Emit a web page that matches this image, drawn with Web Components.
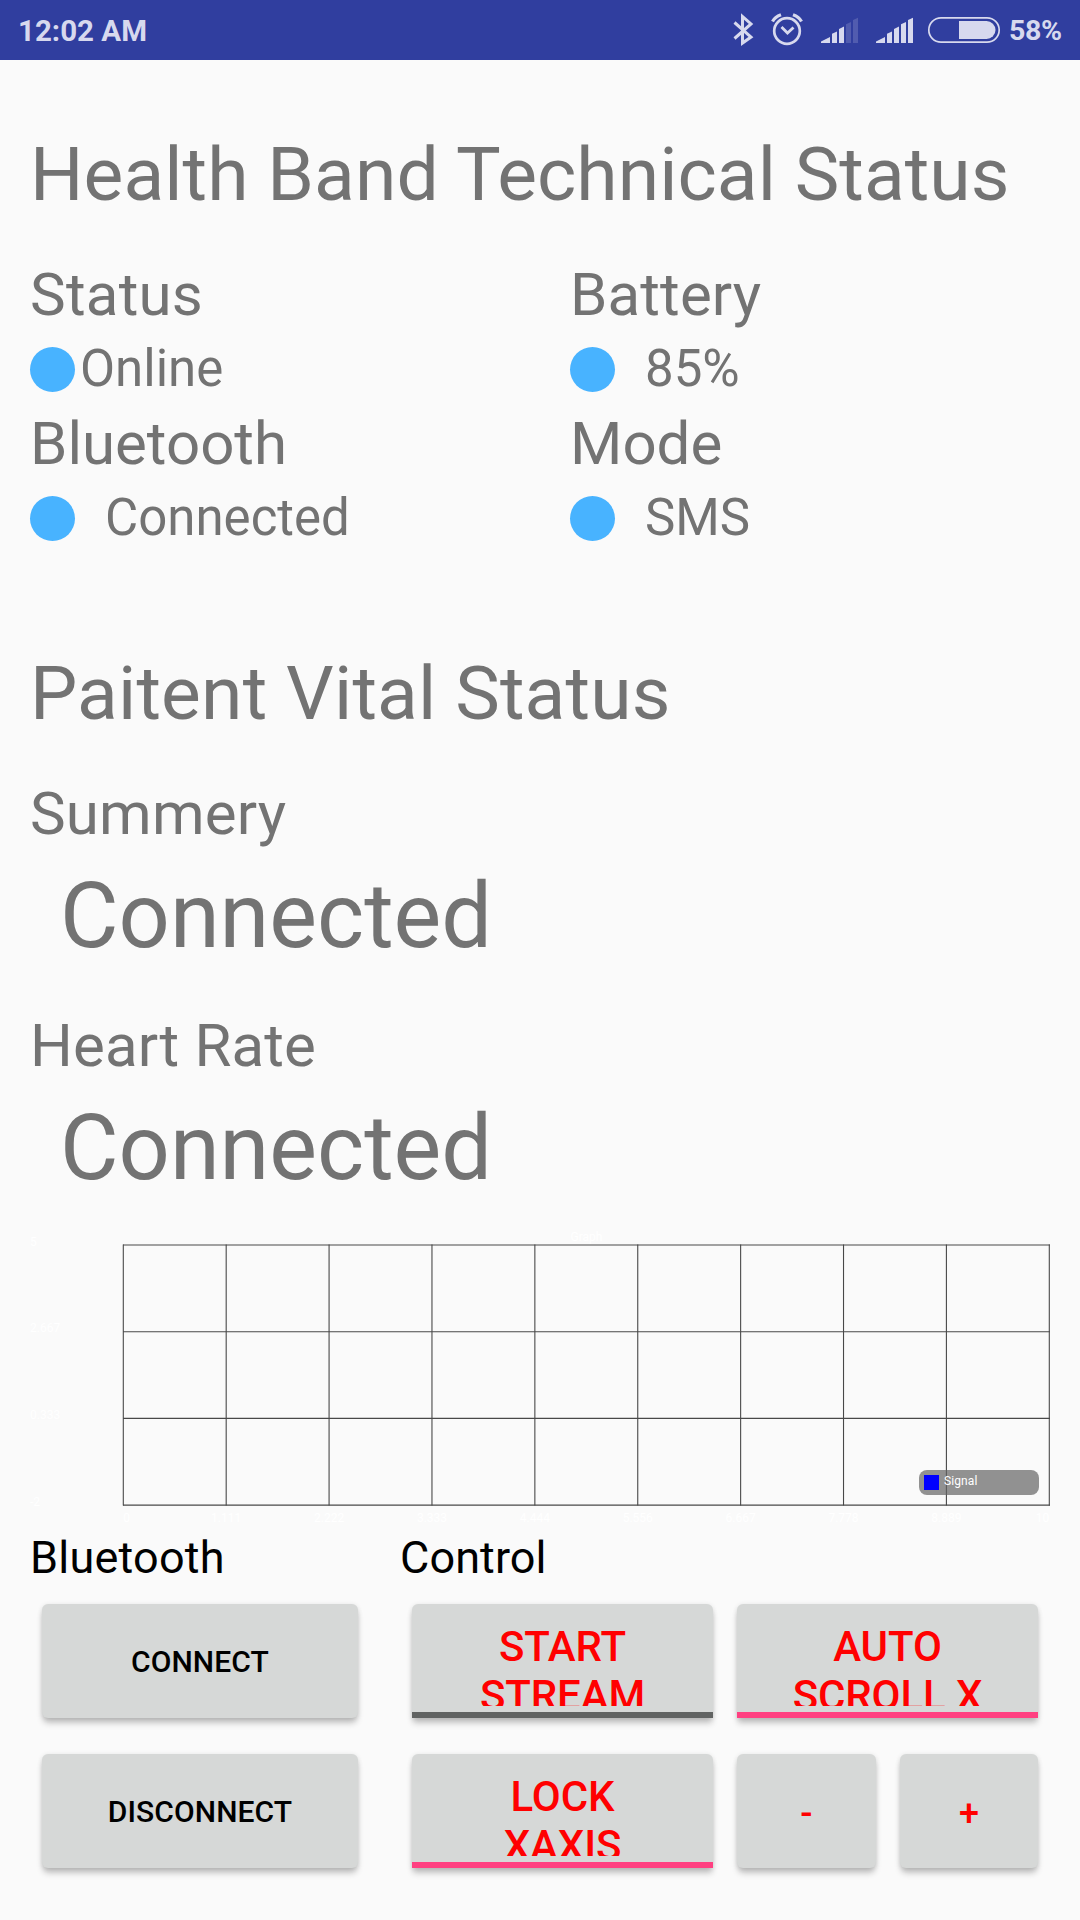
<!DOCTYPE html>
<html lang="en"><head><meta charset="utf-8"><title>Health Band</title>
<style>
html,body{margin:0;padding:0}
body{width:1080px;height:1920px;overflow:hidden;background:#fafafa;font-family:Roboto,"Liberation Sans",sans-serif;color:#737373}
</style></head><body>
<health-screen></health-screen>
<script>
const define=(name,html,init)=>customElements.define(name,class extends HTMLElement{
  constructor(){super();const r=this.attachShadow({mode:'open'});const t=document.createElement('template');t.innerHTML=html;r.append(t.content.cloneNode(true));}
  connectedCallback(){if(init)init(this,this.shadowRoot);}
});

define('status-bar',`<style>
:host{display:flex;align-items:center;height:60px;background:#303e9f;color:#d7d9ee;font-weight:700;font-size:29.5px;box-sizing:border-box;padding:0 18px 0 18px;justify-content:space-between}
svg{display:block}.t{line-height:62px;height:60px;white-space:nowrap}
.r{display:flex;align-items:center;height:60px;gap:3px}
.p{font-size:28.5px;width:53px;letter-spacing:-.3px}
</style><span class="t">12:02 AM</span><div class="r">
<svg width="276" height="60" viewBox="730 0 276 60" fill="none" stroke="#d7d9ee">
<path d="M734.5 22.5 L751 37 L742.5 43 V16.5 L751 24 L734.5 38.5" stroke-width="3"/>
<circle cx="787" cy="31" r="12.8" stroke-width="2.7"/>
<path d="M781.5 27 L787.5 33 L793.5 27.5" stroke-width="2.8"/>
<path d="M772.5 21.5 Q775 17 781 14.8 M801.5 21.5 Q799 17 793 14.8" stroke-width="3.2"/>
<g stroke="none" fill="#d7d9ee"><path d="M821 43V41.5L830 37V43zM832 43V33.7L837 31.5V43zM839 43V29L844 26.5V43z"/><path opacity=".2" d="M846 43V24.3L851 22V43zM853 43V20L858 17.8V43z"/>
<path d="M876 43V41.5L885 37V43zM887 43V33.7L892 31.5V43zM894 43V29L899 26.5V43zM901 43V24.3L906 22V43zM908 43V20L913 17.8V43z"/>
<path d="M959 21H986.5a9 9 0 0 1 0 18H959z"/></g>
<rect x="928.8" y="17.8" width="70.4" height="24.4" rx="12.2" stroke-width="1.7"/>
</svg><span class="t p">58%</span></div>`);

define('text-line',`<style>:host{display:block;white-space:nowrap}</style><slot></slot>`,el=>{
  const h=el.getAttribute('height')+'px';
  el.style.fontSize=el.getAttribute('size')+'px';el.style.lineHeight=h;el.style.height=h;
  if(el.hasAttribute('spacing'))el.style.letterSpacing=el.getAttribute('spacing')+'px';});

define('status-item',`<style>
:host{display:block;width:540px}
.l{font-size:60px;line-height:80px;height:80px}
.v{display:flex;align-items:center;height:69px;font-size:51px;gap:var(--gap,30px)}
.v span{line-height:67px;height:69px}
i{width:45px;height:45px;border-radius:50%;background:#48b3ff}
</style><div class="l"><slot name="label"></slot></div><div class="v"><i></i><span><slot></slot></span></div>`);

define('signal-legend',`<style>
:host{display:flex;align-items:flex-start;box-sizing:border-box;width:120px;height:25px;border-radius:8px;background:rgba(100,100,100,.7);padding:5px;gap:5px;color:#fff;font-size:12px}
i{width:15px;height:15px;background:#00f}span{line-height:14px;height:14px;margin-top:-1px;letter-spacing:.1px}
</style><i></i><span><slot></slot></span>`);

define('signal-graph',`<style>
:host{display:block;position:relative;width:1020px;height:297px}
svg{display:block;overflow:visible}text{font-size:12px;fill:#fff}
signal-legend{position:absolute;left:889px;top:244px}
</style><svg width="1020" height="297" viewBox="30 1226 1020 297"></svg><signal-legend>Signal</signal-legend>`,(el,r)=>{
  const x0=123.3,x1=1049.3,y0=1245,y1=1505.1;let s='<g stroke="#484848" stroke-width="1.1">';
  for(let i=0;i<10;i++){const x=x0+(x1-x0)*i/9;s+='<line x1="'+x+'" x2="'+x+'" y1="1244.5" y2="1505.5"/>';}
  for(let i=0;i<4;i++){const y=y0+(y1-y0)*i/3;s+='<line x1="123" x2="1050" y1="'+y+'" y2="'+y+'"/>';}
  s+='</g>';
  ['5','2.667','0.333','-2'].forEach((t,i)=>s+='<text x="30" y="'+(y0+.5+(y1-y0)*i/3)+'">'+t+'</text>');
  ['0','1.111','2.222','3.333','4.444','5.556','6.667','7.778','8.889','10'].forEach((t,i)=>s+='<text y="1521.5" x="'+(x0+(x1-x0)*i/9)+'" text-anchor="'+(i==0?'start':i==9?'end':'middle')+'">'+t+'</text>');
  s+='<text x="586.5" y="1241" text-anchor="middle">Graph</text>';
  r.querySelector('svg').innerHTML=s;
});

define('raised-button',`<style>
:host{display:flex;box-sizing:border-box;height:114px;border-radius:6px;background:#d6d8d7;box-shadow:0 6px 6px -1px rgba(0,0,0,.22),0 1px 5px rgba(0,0,0,.12);color:var(--ink,#000);font-weight:500;font-size:var(--size,30px);letter-spacing:.1px;align-items:center;justify-content:center;text-align:center;padding-top:var(--drop,0)}
</style><slot></slot>`);

define('toggle-button',`<style>
:host{display:flex;flex-direction:column;justify-content:space-between;box-sizing:border-box;height:114px;border-radius:6px 6px 0 0;background:#d6d8d7;box-shadow:0 6px 6px -1px rgba(0,0,0,.22),0 1px 5px rgba(0,0,0,.12);color:#f00;font-weight:500;font-size:42px;letter-spacing:-.1px;text-align:center}
.c{height:84px;margin-top:18px;overflow:hidden;line-height:49px}
.b{height:6px;background:var(--bar,#ff4081)}
</style><div class="c"><slot></slot></div><div class="b"></div>`);

define('health-screen',`<style>
:host{display:flex;flex-direction:column;width:1080px;height:1920px}
main{display:flex;flex-direction:column;align-items:flex-start;padding:64px 0 0 30px}
.row{display:flex}.big{padding-left:30px}
.panel{display:flex;color:#000;margin-top:5px}
.bt{width:370px;display:flex;flex-direction:column}
.ct{width:650px;display:flex;flex-direction:column}
.btns{display:grid;row-gap:36px;margin-top:16px}
.bt .btns{padding-left:12px;grid-template-columns:316px}
.ct .btns{padding-left:12px;grid-template-columns:301px 301px;column-gap:24px}
.pair{display:grid;grid-template-columns:139px 138px;column-gap:24px;--size:36px;--ink:#f00;--drop:5px}
</style>
<status-bar></status-bar>
<main>
<text-line size="75" height="100" spacing="0.07">Health Band Technical Status</text-line>
<div class="row" style="margin-top:31px">
<status-item style="--gap:5px"><span slot="label" style="letter-spacing:.25px">Status</span>Online</status-item><status-item><span slot="label" style="letter-spacing:.15px">Battery</span>85%</status-item></div>
<div class="row">
<status-item><span slot="label">Bluetooth</span>Connected</status-item><status-item><span slot="label">Mode</span>SMS</status-item></div>
<text-line size="75" height="100" spacing="0.16" style="margin-top:90px">Paitent Vital Status</text-line>
<text-line size="60" height="80" spacing="0.2" style="margin-top:31px">Summery</text-line>
<text-line class="big" size="90" height="126">Connected</text-line>
<text-line size="60" height="80" spacing="0.14" style="margin-top:26px">Heart Rate</text-line>
<text-line class="big" size="90" height="126">Connected</text-line>
<signal-graph style="margin-top:14px"></signal-graph>
<div class="panel">
<div class="bt"><text-line size="45" height="60" spacing="0.22">Bluetooth</text-line><div class="btns"><raised-button>CONNECT</raised-button><raised-button>DISCONNECT</raised-button></div></div>
<div class="ct"><text-line size="45" height="60" spacing="0.1">Control</text-line><div class="btns">
<toggle-button style="--bar:#616362">START<br>STREAM</toggle-button><toggle-button>AUTO<br>SCROLL X</toggle-button>
<toggle-button>LOCK<br>XAXIS</toggle-button><div class="pair"><raised-button>-</raised-button><raised-button>+</raised-button></div>
</div></div></div>
</main>`);
</script></body></html>
